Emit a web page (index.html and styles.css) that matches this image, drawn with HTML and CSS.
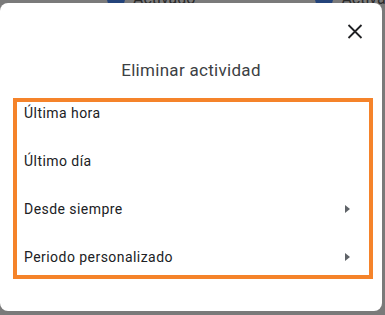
FILE: index.html
```html
<!DOCTYPE html>
<html lang="es">
<head>
    <meta charset="UTF-8">
    <meta name="viewport" content="width=device-width, initial-scale=1.0">
    <title>Eliminar actividad</title>
    <link rel="stylesheet" href="styles.css">
</head>
<body>
    <div class="page-behind">
        <div class="behind-item"><span class="behind-dot"></span>Activado</div>
        <div class="behind-item"><span class="behind-dot"></span>Activado</div>
    </div>

    <div class="dialog">
        <div class="dialog-top">
            <button class="close" aria-label="Cerrar">
                <svg width="16" height="16" viewBox="0 0 16 16">
                    <path d="M1.5 2 L14.5 15 M14.5 2 L1.5 15" stroke="#202124" stroke-width="1.8" fill="none"/>
                </svg>
            </button>
        </div>
        <h2 class="dialog-title">Eliminar actividad</h2>
        <ul class="options">
            <li class="option">Última hora</li>
            <li class="option">Último día</li>
            <li class="option">Desde siempre <span class="arrow"></span></li>
            <li class="option">Periodo personalizado <span class="arrow"></span></li>
        </ul>
    </div>
</body>
</html>
```

FILE: styles.css
```css
html, body {
    margin: 0;
    height: 100%;
}
body {
    width: 385px;
    height: 315px;
    overflow: hidden;
    position: relative;
    background-color: #7a7a7a;
    font-family: Roboto, "Liberation Sans", sans-serif;
}
.page-behind {
    display: flex;
    gap: 120px;
    margin-top: -11px;
    padding-left: 107px;
}
.behind-item {
    display: flex;
    align-items: center;
    gap: 8px;
    font-size: 16px;
    line-height: 20px;
    color: #2a2a2a;
}
.behind-dot {
    width: 18px;
    height: 18px;
    border-radius: 50%;
    background-color: #24447a;
}
.dialog {
    position: absolute;
    top: 3px;
    left: 0;
    width: 382px;
    height: 308px;
    background-color: white;
    border-radius: 8px;
}
.dialog-top {
    display: flex;
    justify-content: flex-end;
    padding: 20px 19px 0 0;
}
.close {
    width: 16px;
    height: 16px;
    padding: 0;
    border: none;
    background: none;
    cursor: pointer;
}
.close svg {
    display: block;
}
.dialog-title {
    margin: 19px 0 0;
    text-align: center;
    font-size: 17px;
    font-weight: 400;
    line-height: 24px;
    letter-spacing: 0.3px;
    color: #3c4043;
}
.options {
    list-style: none;
    margin: 16px 9px 0 13px;
    padding: 1px 0 8px;
    border: 4px solid #f5832a;
}
.option {
    display: flex;
    justify-content: space-between;
    align-items: center;
    padding: 0 19px 0 7px;
    font-size: 14px;
    line-height: 20px;
    letter-spacing: 0.45px;
    color: #202124;
}
.option + .option {
    margin-top: 28px;
}
.arrow {
    width: 0;
    height: 0;
    border-left: 5px solid #5f6368;
    border-top: 4px solid transparent;
    border-bottom: 4px solid transparent;
}
```
